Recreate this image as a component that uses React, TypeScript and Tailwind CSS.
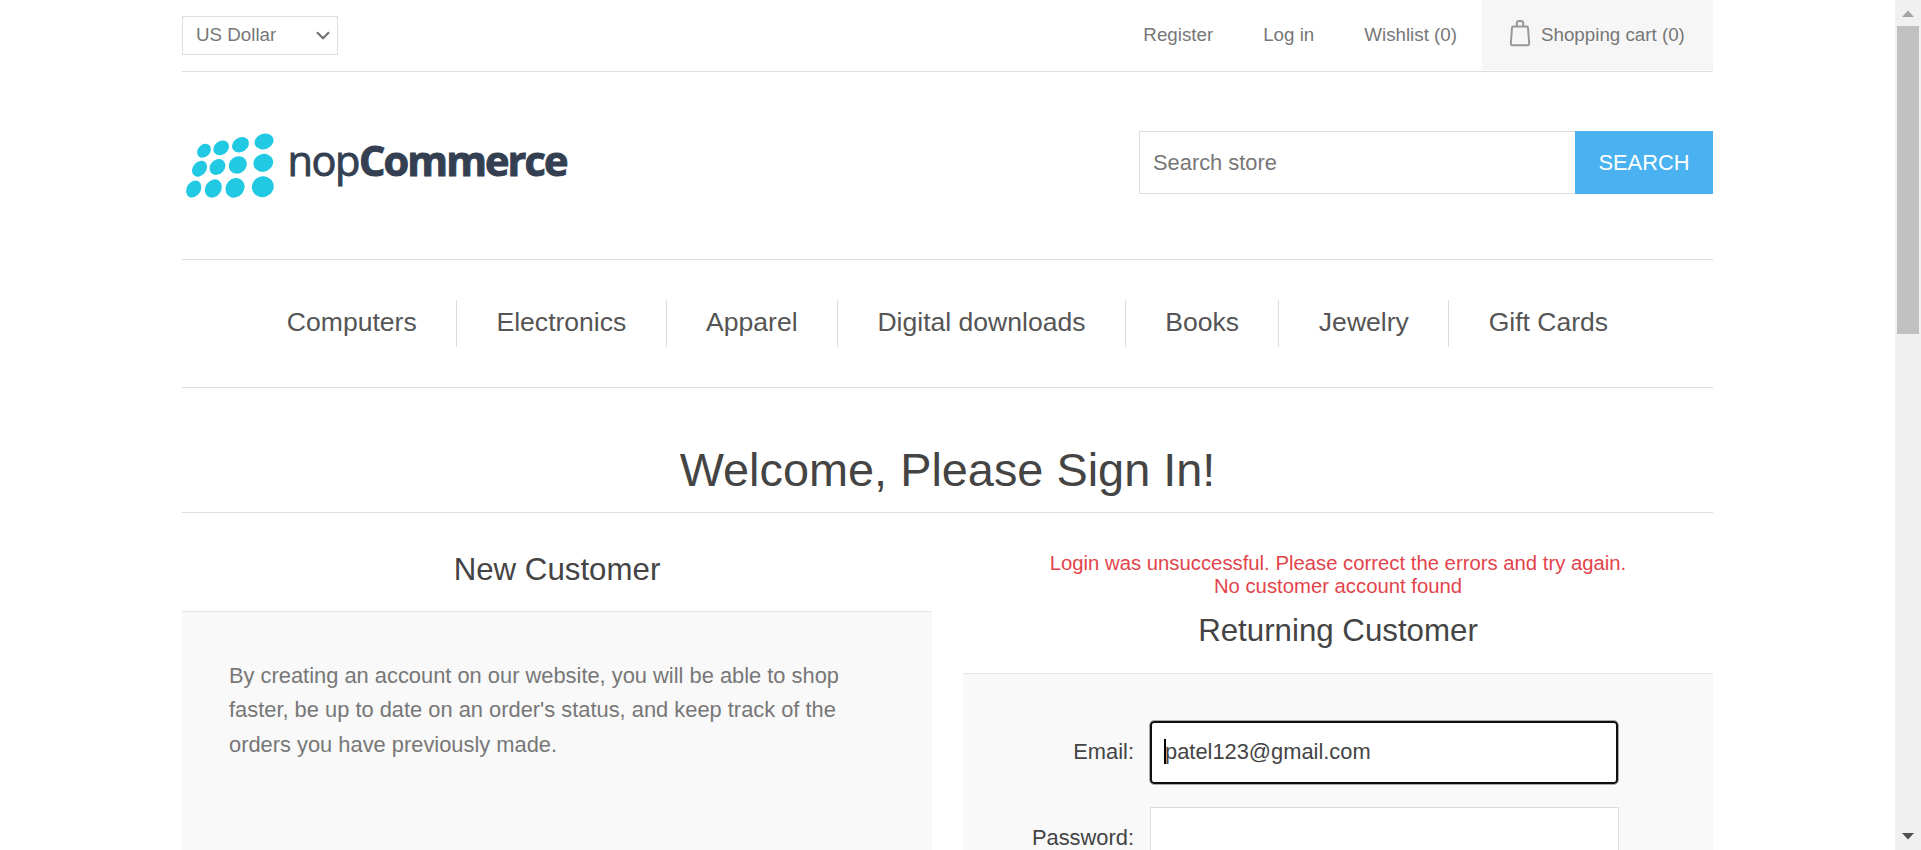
const menu = ["Computers", "Electronics", "Apparel", "Digital downloads", "Books", "Jewelry", "Gift Cards"];

// cx, cy, rx, ry, rotation
const dots = [
  [204, 150.7, 7.7, 6.1, -45], [221.2, 147.9, 8.4, 6.8, -38], [240.5, 144.7, 9, 7.2, -33], [264, 141.4, 9.7, 7.7, -20],
  [199.5, 168.7, 8.7, 6.7, -50], [217.5, 166.9, 8.7, 7.2, -46], [237.8, 164.9, 9.4, 8.3, -38], [263.3, 162.8, 10, 8.8, -18],
  [193.7, 189, 9, 7, -58], [213.3, 188.5, 9.7, 7.9, -56], [235, 187.8, 10.3, 9.1, -50], [262.8, 186.8, 11, 10.4, -20],
];

function Logo() {
  return (
    <svg className="overflow-visible" width="390" height="80" viewBox="182 125 390 80" aria-label="nopCommerce">
      {dots.map(([x, y, a, b, r], i) => (
        <ellipse key={i} cx={x} cy={y} rx={a} ry={b} fill="#22c9e2" transform={`rotate(${r} ${x} ${y})`} />
      ))}
      <g fontFamily="'Open Sans', sans-serif" fontSize="41.5" fill="#343f52" stroke="#343f52">
        <text x="287.500" y="176" strokeWidth="0.9" textLength="73" lengthAdjust="spacing">nop</text>
        <text x="359" y="176" fontWeight="700" strokeWidth="1" textLength="209.500" lengthAdjust="spacing">Commerce</text>
      </g>
    </svg>
  );
}

function Header() {
  return (
    <header>
      <div className="flex h-[72px] items-start justify-between border-b border-[#ddd] text-[18.75px] text-[#777]">
        <div className="mt-4 flex h-[39px] w-[156px] items-center justify-between border border-[#ddd] pr-[7px] pl-[13px]">
          <span>US Dollar</span>
          <svg width="14" height="9" viewBox="0 0 14 9" fill="none" stroke="#707070" strokeWidth="2.2">
            <path d="M1 1.200 7 7.200 13 1.200" />
          </svg>
        </div>
        <nav className="flex h-[70px] leading-[70px]">
          <a className="mr-[50px]">Register</a>
          <a className="mr-[50px]">Log in</a>
          <a className="mr-[25px]">Wishlist (0)</a>
          <a className="flex w-[231px] bg-[#f6f6f6] pl-7">
            <svg className="mt-[19px] mr-[10px]" width="21" height="28" viewBox="0 0 21 28" fill="none" stroke="#989898" strokeWidth="2">
              <path d="M3.500 7.500h13q1.400 0 1.500 1.300l1.200 15.500q0 1.900-1.800 1.900H2.600q-1.800 0-1.800-1.900L2 8.800q.1-1.300 1.500-1.300Z" />
              <path d="M6.800 7.500V4.300Q6.800 2 9 2h2q2.200 0 2.200 2.300V7.500" />
            </svg>
            <span>Shopping cart (0)</span>
          </a>
        </nav>
      </div>
      <div className="flex h-[188px] items-start justify-between border-b border-[#ddd]">
        <div className="pt-[53px]"><Logo /></div>
        <div className="mt-[59px] flex h-[63px] w-[574px] text-[21.875px]">
          <input className="min-w-0 flex-1 border border-r-0 border-[#ddd] px-[13px] pt-[2px] text-[#777] outline-none placeholder:text-[#777]" placeholder="Search store" />
          <button className="w-[138px] bg-[#4ab2f1] pt-px text-white">SEARCH</button>
        </div>
      </div>
      <ul className="flex h-[128px] justify-center border-b border-[#ddd] pt-10 text-[26.56px] leading-[44px] text-[#555]">
        {menu.map((m) => (
          <li key={m} className="h-[47px] border-r border-[#ddd] px-[39.4px] last:border-r-0">{m}</li>
        ))}
      </ul>
    </header>
  );
}

function Scrollbar() {
  return (
    <div className="flex h-full w-[26px] flex-col items-center bg-[#f0f0f0]">
      <svg className="shrink-0" width="26" height="26"><path d="M7 17h12l-6-6.500Z" fill="#a3a3a3" /></svg>
      <div className="h-[308px] w-[22px] bg-[#c1c1c1]" />
      <svg className="mt-auto shrink-0" width="26" height="26"><path d="M7 9h12l-6 6.500Z" fill="#505050" /></svg>
    </div>
  );
}

export default function App() {
  return (
    <div className="flex h-[850px] w-full overflow-hidden bg-white font-['Liberation_Sans',Arial,sans-serif]">
      <div className="flex flex-1 justify-center">
        <div className="w-[1531px]">
          <Header />
          <main>
            <h1 className="h-[125px] border-b border-[#ddd] pt-[55px] text-center text-[46.875px] leading-[54px] text-[#444]">Welcome, Please Sign In!</h1>
            <div className="flex justify-between">
              <section className="w-[750px]">
                <h2 className="h-[98px] pt-[39px] text-center text-[31.25px] leading-9 text-[#444]">New Customer</h2>
                <div className="h-[400px] border-t border-[#e6e6e6] bg-[#f9f9f9] px-[47px] pt-[47px] text-[21.875px] leading-[34.375px] text-[#777]">
                  By creating an account on our website, you will be able to shop faster, be up to date on an order's status, and keep track of the orders you have previously made.
                </div>
              </section>
              <section className="w-[750px]">
                <div className="pt-[39px] text-center text-[20.3125px] leading-[23px] text-[#e4434b]">
                  <p>Login was unsuccessful. Please correct the errors and try again.</p>
                  <p>No customer account found</p>
                </div>
                <h2 className="h-[75px] pt-[15px] text-center text-[31.25px] leading-9 text-[#444]">Returning Customer</h2>
                <form className="h-[340px] border-t border-[#e6e6e6] bg-[#f9f9f9] pt-[47px] text-[21.875px] text-[#444]">
                  <div className="flex items-center">
                    <label className="w-[171px] text-right">Email:</label>
                    <div className="relative ml-4 h-[63px] w-[468px]">
                      <input className="h-full w-full rounded-[4px] border-2 border-[#101010] bg-white px-[13px] pb-[2px] outline outline-[#aaa]" defaultValue="patel123@gmail.com" />
                      <span className="absolute top-[18px] left-[14px] h-[25px] w-[1.500px] bg-black" />
                    </div>
                  </div>
                  <div className="mt-[23px] flex items-center">
                    <label className="w-[171px] text-right">Password:</label>
                    <input className="ml-4 h-[62px] w-[469px] border border-[#ddd] bg-white px-[13px] outline-none" type="password" />
                  </div>
                </form>
              </section>
            </div>
          </main>
        </div>
      </div>
      <Scrollbar />
    </div>
  );
}
